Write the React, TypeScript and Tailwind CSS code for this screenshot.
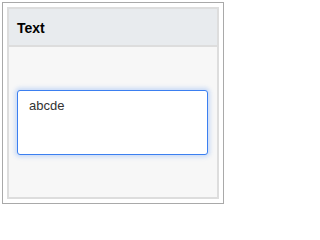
export default function App() {
  return (
    <div className="h-[207px] w-[227px] bg-white p-[2px] font-['Liberation_Sans',Arial,sans-serif]">
      <div className="h-[202px] w-[222px] border border-[#a9a9a9] p-[4px]">
        <div className="flex h-[192px] w-[212px] flex-col border-2 border-[#dddddd] bg-[#f7f7f7]">
          <div className="flex h-[38px] shrink-0 items-center border-b-2 border-[#dddddd] bg-[#e8ebee] pl-[8px] pt-[3px] text-[14px] font-bold text-black">
            Text
          </div>
          <div className="flex flex-1 items-center pl-[8px] pt-[1px]">
            <div className="h-[65px] w-[191px] rounded-[3px] border border-[#3b7ff0] bg-white px-[11px] pt-[7px] text-[13px] leading-[15px] text-[#333333] shadow-[0_0_4px_2px_rgba(90,150,245,0.3)]">
              abcde
            </div>
          </div>
        </div>
      </div>
    </div>
  );
}
